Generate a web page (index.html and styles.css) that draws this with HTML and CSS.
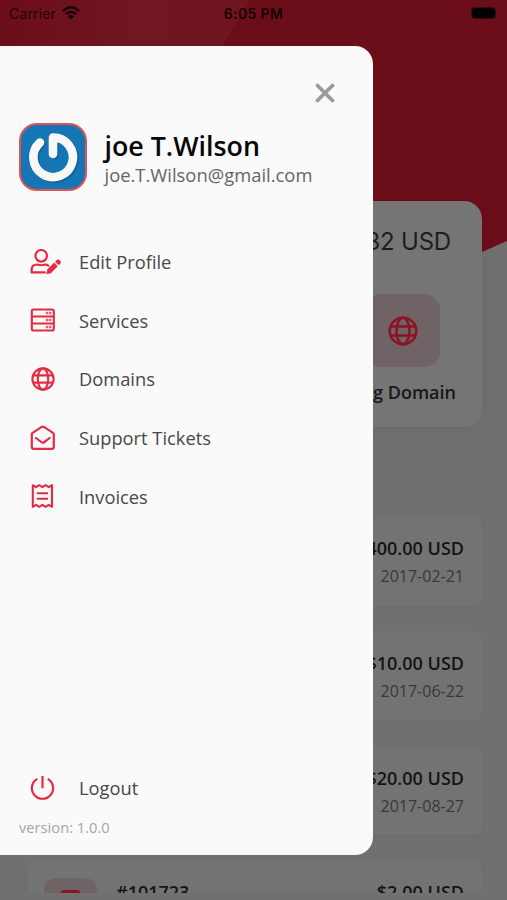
FILE: index.html
```html
<!DOCTYPE html>
<html lang="en">
<head>
<meta charset="utf-8">
<title>Account menu</title>
<link rel="stylesheet" href="styles.css">
</head>
<body>
<svg class="defs" aria-hidden="true">
  <symbol id="globe" viewBox="0 0 24 24">
    <g fill="none" stroke="currentColor" stroke-width="2.1"><circle cx="12" cy="12" r="10.6"/><ellipse cx="12" cy="12" rx="5.2" ry="10.6"/><path d="M2.1 8.4h19.8M2.1 15.6h19.8"/></g>
  </symbol>
</svg>
<div class="phone">
  <svg class="backdrop" viewBox="0 0 507 260">
    <defs><linearGradient id="band"><stop offset="0" stop-color="#6c0e19"/><stop offset=".55" stop-color="#701722"/><stop offset="1" stop-color="#6f1520"/></linearGradient></defs>
    <path d="M0 0H507V241L466 259H0Z" fill="#6c0e19"/>
    <path d="M0 0H250L214 60H0Z" fill="url(#band)"/>
  </svg>
  <header class="status">
    <div class="carrier"><span>Carrier</span>
      <svg width="18" height="14" viewBox="0 0 18 14"><g fill="none" stroke="#160205" stroke-width="2.5"><path d="M1 5.1Q9-2.6 17 5.1M4 8.2Q9 3.5 14 8.2"/></g><path d="M9 13.4L5.9 10.3Q9 7.7 12.1 10.3Z" fill="#160205"/></svg>
    </div>
    <div class="time">6:05 PM</div>
    <div class="power"><i class="battery"></i></div>
  </header>

  <main class="content">
    <section class="summary">
      <div class="balance">$32 USD</div>
      <div class="shortcut">
        <div class="tile"><svg width="30" height="30"><use href="#globe"/></svg></div>
        <div class="shortcut-label">Reg Domain</div>
      </div>
    </section>
    <section class="invoices">
      <article class="invoice"><div class="amount">$400.00 USD</div><div class="date">2017-02-21</div></article>
      <article class="invoice"><div class="amount">$10.00 USD</div><div class="date">2017-06-22</div></article>
      <article class="invoice"><div class="amount">$20.00 USD</div><div class="date">2017-08-27</div></article>
      <article class="invoice partial"><div class="mark"><i></i></div><div class="number">#101723</div><div class="amount">$2.00 USD</div></article>
    </section>
  </main>

  <aside class="drawer">
    <button class="close" aria-label="Close"><svg width="20" height="20" viewBox="0 0 20 20"><path d="M2.5 2.5L17.5 17.5M17.5 2.5L2.5 17.5" stroke="#9b9b9b" stroke-width="3.8" stroke-linecap="round"/></svg></button>
    <div class="profile">
      <svg class="avatar" width="68" height="68" viewBox="0 0 68 68">
        <rect x="1" y="1" width="66" height="66" rx="17" fill="#1476b5" stroke="#e25252" stroke-width="2"/>
        <g fill="none" stroke-linecap="round" stroke-width="8.6"><path d="M21.5 20.5A19.8 19.8 0 1 0 34.5 15V31.5" stroke="#0a558c" opacity=".5" transform="translate(.8 1)"/><path d="M21 19.5A19.8 19.8 0 1 0 34 14.5V31" stroke="#f8f8f8" stroke-linejoin="round"/></g>
      </svg>
      <div class="who"><div class="name">joe T.Wilson</div><div class="email">joe.T.Wilson@gmail.com</div></div>
    </div>
    <nav class="menu">
      <a class="item"><svg width="32" height="26" viewBox="0 0 32 26" fill="none" stroke="currentColor" stroke-width="2.2"><circle cx="11.2" cy="6.8" r="5.8"/><path d="M18.2 16.7Q16.8 15.5 15.2 15.5Q11.2 17 7.3 15.5Q1.6 15.5 1.6 21V23.4H14.8" stroke-linecap="round" stroke-linejoin="round"/><path d="M16.6 25L17.4 20.6 24.2 13.8 27.6 17.2 20.8 24ZM25.3 12.7L27 11.1Q28.3 10.2 29.4 11.3L30.2 12.1Q31.2 13.2 30.4 14.3L28.7 16.1Z" fill="currentColor" stroke="currentColor" stroke-width=".4"/></svg><span>Edit Profile</span></a>
      <a class="item"><svg width="32" height="24" viewBox="0 0 32 24" fill="none" stroke="currentColor" stroke-width="2.1"><rect x="1.8" y="1.5" width="22" height="21" rx="1.8"/><path d="M2 8.5H23.5M2 15.5H23.5"/><path d="M15.8 5H21.5M15.8 12H21.5M15.8 19H21.5" stroke-width="2.3" stroke-dasharray="2.4 .8" opacity=".75"/></svg><span>Services</span></a>
      <a class="item"><svg width="24" height="24" class="menu-globe"><use href="#globe"/></svg><span>Domains</span></a>
      <a class="item"><svg width="32" height="26" viewBox="0 0 32 26" fill="none" stroke="currentColor" stroke-width="2.2" stroke-linecap="round" stroke-linejoin="round"><path d="M1.8 9.3Q1.8 8.4 2.6 7.8L11.3 2.1Q12.8 1.1 14.3 2.1L23 7.8Q23.8 8.4 23.8 9.3V22.1Q23.8 23.8 22.1 23.8H3.5Q1.8 23.8 1.8 22.1Z"/><path d="M6 13L11.2 17Q12.8 18.2 14.4 17L19.6 13"/></svg><span>Support Tickets</span></a>
      <a class="item"><svg width="32" height="26" viewBox="0 0 32 26" fill="none" stroke="currentColor" stroke-width="2.1" stroke-linejoin="round"><path d="M2.8 2.2L6 4.2 9.2 2.2 12.4 4.2 15.6 2.2 18.8 4.2 22 2.2V23.8L18.8 21.8 15.6 23.8 12.4 21.8 9.2 23.8 6 21.8 2.8 23.8Z"/><path d="M6.8 10.3H18M6.8 15.7H18"/></svg><span>Invoices</span></a>
    </nav>
    <div class="footer">
      <a class="item"><svg width="32" height="26" viewBox="0 0 32 26" fill="none" stroke="currentColor" stroke-width="2.2"><path d="M7.3 3.9A10.6 10.6 0 1 0 17.7 3.9M12.5 1V13.3"/></svg><span>Logout</span></a>
      <div class="version">version: 1.0.0</div>
    </div>
  </aside>
</div>
</body>
</html>
```

FILE: styles.css
```css
* { box-sizing: border-box; }
body { margin: 0; font-family: "Open Sans", sans-serif; }
.defs { position: absolute; width: 0; height: 0; }
.phone { position: relative; width: 507px; height: 900px; overflow: hidden; background: #707070; }
.backdrop { position: absolute; top: 0; left: 0; width: 507px; height: 260px; }

.status { position: relative; height: 28px; padding: 0 11px 2px 9px; display: grid; grid-template-columns: 1fr auto 1fr; align-items: center; font-family: Inter, sans-serif; font-size: 14px; color: #230408; }
.carrier { display: flex; align-items: center; gap: 6px; letter-spacing: .15px; }
.carrier svg { margin-top: -1px; }
.time { font-weight: 600; color: #160205; letter-spacing: .35px; margin-left: 2px; }
.power { display: flex; justify-content: flex-end; }
.battery { width: 25px; height: 12px; border-radius: 4px; background: #000; border: 1px solid #3b080e; }

.content { position: relative; height: 865px; padding: 173px 25px 0 28px; overflow: hidden; }
.summary { height: 226px; border-radius: 18px; background: #757575; box-shadow: 0 4px 16px rgba(0, 0, 0, .05); padding: 22px 31px 0 0; }
.balance { text-align: right; font-family: Inter, sans-serif; font-size: 24px; line-height: 38px; letter-spacing: -.2px; color: #1c1e22; }
.shortcut { width: 108px; margin: 33px -5px 0 auto; display: flex; flex-direction: column; align-items: center; }
.tile { width: 74px; height: 73px; border-radius: 16px; background: #706365; color: #8a1426; display: flex; align-items: center; justify-content: center; margin-left: 2px; }
.tile svg, .menu-globe { overflow: visible; }
.shortcut-label { margin-top: 12px; font-size: 18px; line-height: 26px; font-weight: 600; white-space: nowrap; color: #15181c; align-self: flex-end; }
.invoices { margin-top: 89px; display: flex; flex-direction: column; gap: 25px; }
.invoice { height: 89.8px; flex: none; padding: 18px 18px 0 20px; text-align: right; border-radius: 8px; background: #737373; box-shadow: 0 3px 10px rgba(0, 0, 0, .025); }
.amount { font-size: 18px; line-height: 28px; font-weight: 600; color: #131414; }
.date { font-size: 16px; line-height: 28px; color: #383838; }
.partial { display: flex; align-items: flex-start; }
.partial .amount { margin-left: auto; }
.mark { width: 53px; height: 53px; margin: 0 19px 0 -4px; border-radius: 12px; background: #706365; display: flex; justify-content: center; padding-top: 12px; }
.mark i { width: 19px; height: 24px; border-radius: 3px; background: #8a1426; }
.number { font-size: 18px; line-height: 28px; font-weight: 600; color: #131414; }

.drawer { position: absolute; left: 0; top: 46px; width: 372.5px; height: 808.7px; border-radius: 0 18px 18px 0; background: #fafafa; display: flex; flex-direction: column; padding: 37px 37.5px 17px 19px; }
.close { align-self: flex-end; width: 20px; height: 20px; padding: 0; border: 0; background: none; display: flex; }
.profile { display: flex; gap: 17.5px; margin-top: 19.5px; }
.avatar { flex: none; }
.name { font-size: 26.8px; line-height: 33px; margin-top: 6px; font-weight: 600; color: #080808; white-space: nowrap; }
.email { font-size: 18.4px; line-height: 26px; color: #656565; white-space: nowrap; }
.menu { margin-top: 42px; }
.item { height: 58.6px; display: grid; grid-template-columns: 50px 1fr; align-items: center; padding-left: 10px; font-size: 18.3px; color: #e62a43; }
.item svg { margin-left: 1px; }
.item span { color: #484848; }
.menu .menu-globe { margin-left: 1.5px; }
.footer { margin-top: auto; }
.footer .item { height: 56px; }
.version { font-size: 14.7px; line-height: 22px; color: #a6a6a6; }
```
